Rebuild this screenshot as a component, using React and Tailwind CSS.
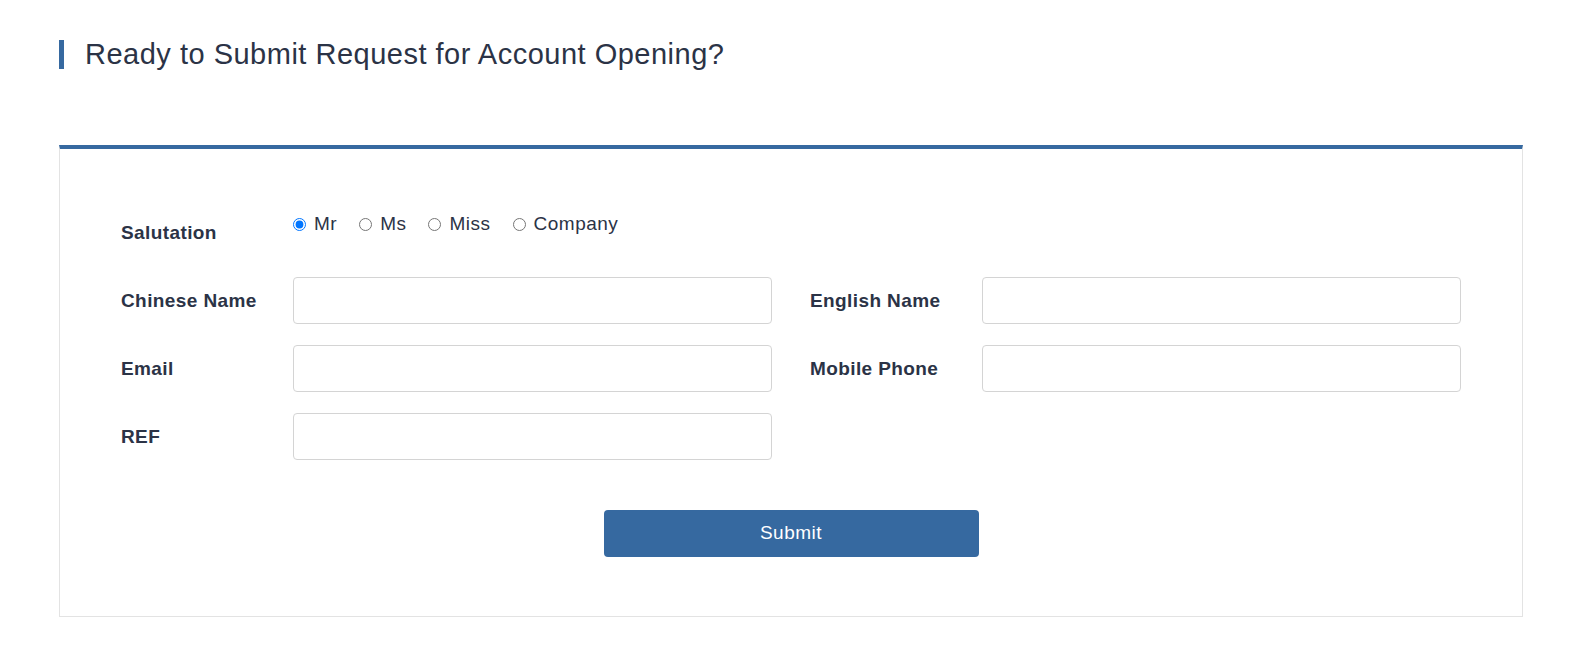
import React from "react";

const Field = ({ label }) => (
  <div className="flex items-center">
    <label className="w-[172px] shrink-0 text-[19px] leading-[22px] tracking-[0.4px] font-bold text-[#2b3346]">{label}</label>
    <input type="text" className="h-[47px] flex-1 rounded-[4px] border border-[#d4d4d4] bg-white px-3 outline-none" />
  </div>
);

const App = () => {
  const salutations = ["Mr", "Ms", "Miss", "Company"];

  return (
    <div className="min-h-screen bg-white pl-[59px] pr-[47px] pt-[40px] font-['Liberation_Sans',Arial,sans-serif] text-[#2b3346]">
      <div className="flex items-center border-l-[5px] border-[#3669a0] pl-[21px] h-[29px]">
        <h1 className="text-[29px] leading-none tracking-[0.5px] font-normal text-[#2b3346]">Ready to Submit Request for Account Opening?</h1>
      </div>

      <div className="mt-[76px] border border-t-[4px] border-[#e3e3e3] border-t-[#3669a0] pl-[61px] pr-[61px] pt-[64px] pb-[59px]">
        <div className="flex items-start">
          <div className="w-[172px] shrink-0 pt-[9px] text-[19px] leading-[22px] tracking-[0.4px] font-bold">Salutation</div>
          <div className="flex items-center gap-[22px]">
            {salutations.map((s, i) => (
              <label key={s} className="flex items-center gap-[8px] text-[19px] leading-[22px] tracking-[0.5px] text-[#2b3346]">
                <input type="radio" name="salutation" defaultChecked={i === 0} className="m-0 h-[13px] w-[13px]" />
                {s}
              </label>
            ))}
          </div>
        </div>

        <div className="mt-[33px] grid grid-cols-2 gap-x-[38px] gap-y-[21px]">
          <Field label="Chinese Name" />
          <Field label="English Name" />
          <Field label="Email" />
          <Field label="Mobile Phone" />
          <Field label="REF" />
        </div>

        <div className="mt-[50px] flex justify-center">
          <button className="h-[47px] w-[375px] rounded-[4px] bg-[#3669a0] text-[19px] tracking-[0.5px] text-white">Submit</button>
        </div>
      </div>
    </div>
  );
};

export default App;
